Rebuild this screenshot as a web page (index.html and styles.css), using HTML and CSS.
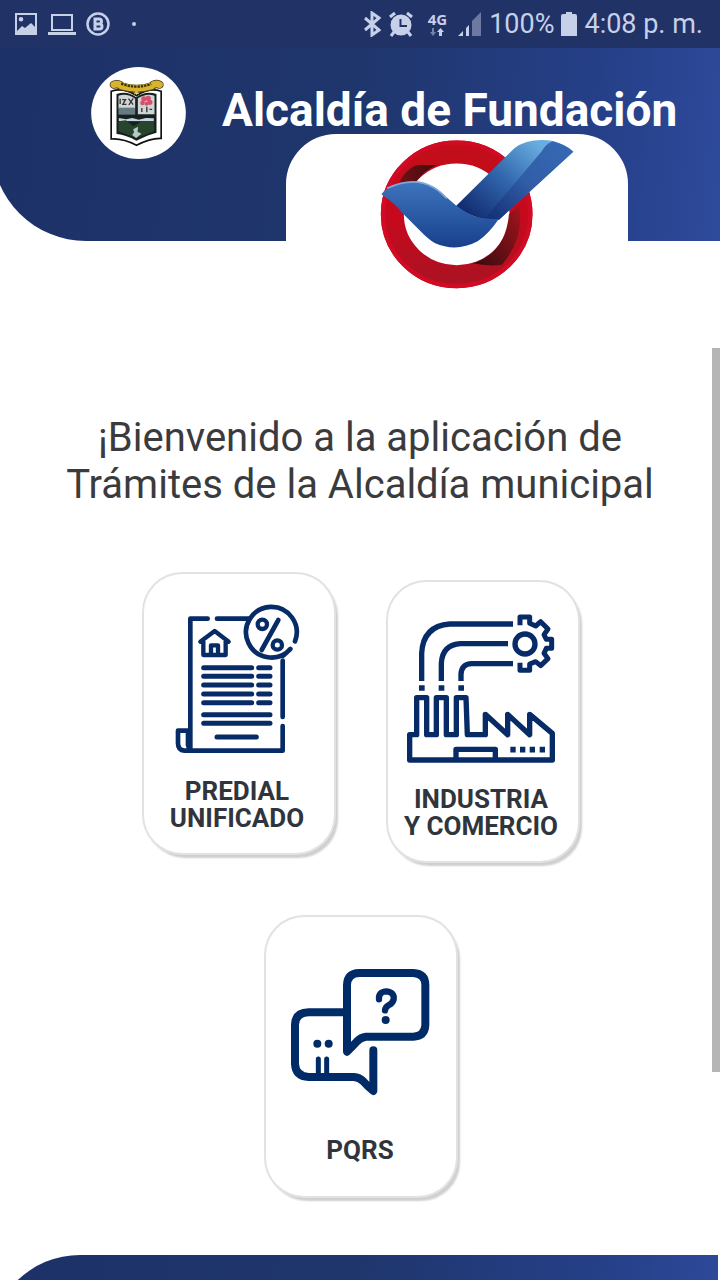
FILE: index.html
```html
<!DOCTYPE html>
<html lang="es">
<head>
<meta charset="utf-8">
<meta name="viewport" content="width=device-width, initial-scale=1">
<title>Alcaldía de Fundación</title>
<link rel="stylesheet" href="styles.css">
</head>
<body>
<div class="status">
  <div class="status-left">
    <svg width="24" height="24" viewBox="0 0 24 24"><path fill="currentColor" fill-rule="evenodd" d="M1 1h22v22H1zM3 3v16l5-5 3 2 6-5 4 4V3zM7 5a2.300 2.300 0 1 1 0 4.600a2.300 2.300 0 0 1 0-4.600z"/></svg>
    <svg width="28" height="24" viewBox="0 0 28 24"><path fill="none" stroke="currentColor" stroke-width="2" d="M4 3h20v15H4z"/><path fill="currentColor" d="M0 20h28v3H0z"/></svg>
    <svg width="24" height="24" viewBox="0 0 24 24" fill="none" stroke="currentColor"><circle cx="12" cy="12" r="10.500" stroke-width="2.500"/><path stroke-width="3" d="M9 7h4a2 2 0 0 1 0 5H9zM9 12h4.500a2.300 2.300 0 0 1 0 5H9z"/></svg>
    <span class="dot"></span>
  </div>
  <div class="status-right">
    <svg width="18" height="26" viewBox="0 0 18 26" fill="none" stroke="currentColor" stroke-width="3"><path d="M2 7l14 12-7 5V2l7 5L2 19"/></svg>
    <svg width="26" height="26" viewBox="0 0 26 26"><circle cx="13" cy="14" r="10.500" fill="currentColor"/><path fill="none" stroke="currentColor" stroke-width="3" d="M2 6l5-4M24 6l-5-4M6 21l-3 4M20 21l3 4"/><path class="cut" d="M12.500 8v7H19"/></svg>
    <span class="network"><b>4G</b><svg width="16" height="8" viewBox="0 0 16 8"><path fill="currentColor" opacity=".5" d="M3 0h2v4h2L4 8 1 4h2z"/><path fill="currentColor" d="M10 8h3V4h2l-3.500-4L8 4h2z"/></svg></span>
    <svg width="24" height="26" viewBox="0 0 24 26" fill="currentColor"><path d="M0 25l5-5v5zM8 17l3-3v11H8z"/><path opacity=".45" d="M14 10l9-9v24h-9z"/></svg>
    <span>100%</span>
    <svg width="16" height="26" viewBox="0 0 16 26"><path fill="currentColor" d="M5 1h6v2h3a2 2 0 0 1 2 2v20H0V5a2 2 0 0 1 2-2h3z"/></svg>
    <span>4:08 p. m.</span>
  </div>
</div>

<header class="banner">
  <div class="brand">
    <svg class="crest" viewBox="36 18 284 276" role="img" aria-label="Escudo de Fundación">
      <ellipse cx="178" cy="156" rx="142" ry="138" fill="#fff"/>
      <path fill="#fff" stroke="#111" stroke-width="5" d="M96 91Q135 78 172 104Q209 78 246 91V232Q213 231 172 253Q130 231 96 234z"/>
      <path fill="#16201f" d="M112 99Q145 88 171 109Q198 88 232 99V215Q210 220 172 239Q133 219 112 219z"/>
      <path fill="#cfd5d5" d="M118 104Q145 96 168 113V143H118zM176 112Q202 95 226 104V160H176z"/>
      <path fill="#667b80" d="M118 140h50v21h-50z"/>
      <path fill="none" stroke="#333" stroke-width="4" d="M123 113v16M129 116h10l-8 14h11M148 113l14 18M162 112l-13 20M188 141v12M203 137v17M211 145h8"/>
      <g fill="#d9506e"><circle cx="194" cy="114" r="8"/><circle cx="207" cy="112" r="8"/><circle cx="212" cy="124" r="8"/><circle cx="190" cy="126" r="7"/><circle cx="202" cy="128" r="6"/></g>
      <path fill="#c3d5e1" d="M119 171l22 4 18-4 20 5 21-5 24 1v9l-105-1z"/>
      <path fill="#28442d" d="M118 181l22-3 23 18 25-15 37-1v31l-53 20-54-20z"/>
      <path fill="#b6c9c5" d="M162 205l15-8-2 15 12 6-16 13-12-9 6-8z"/>
      <path fill="none" stroke="#473b12" stroke-width="25" stroke-linecap="round" d="M104 71Q119 67 127 76Q172 91 217 76Q228 65 241 71"/>
      <path fill="none" stroke="#d7b42c" stroke-width="20" stroke-linecap="round" d="M104 71Q119 66 127 75Q172 89 217 75Q228 65 241 71"/>
      <path fill="none" stroke="#39300f" stroke-width="7" stroke-dasharray="7 3" d="M126 68Q172 85 216 69"/>
      <path fill="#d7b42c" d="M168 88h7l4 12-7-3-7 4z"/>
    </svg>
    <h1 class="title">Alcaldía de Fundación</h1>
  </div>
  <div class="tab">
    <svg class="check" viewBox="60 36 582 456" role="img" aria-label="Marca de verificación">
      <defs>
        <linearGradient id="ring" x1="0" y1="0" x2="0" y2="1"><stop offset="0" stop-color="#c20e1b"/><stop offset=".5" stop-color="#c8081d"/><stop offset="1" stop-color="#ad1222"/></linearGradient>
        <linearGradient id="arm" gradientUnits="userSpaceOnUse" x1="340" y1="270" x2="530" y2="50"><stop offset="0" stop-color="#132e73"/><stop offset=".5" stop-color="#3167ad"/><stop offset="1" stop-color="#68ade0"/></linearGradient>
        <linearGradient id="side" gradientUnits="userSpaceOnUse" x1="400" y1="280" x2="600" y2="60"><stop offset="0" stop-color="#143277"/><stop offset=".5" stop-color="#315da7"/><stop offset="1" stop-color="#3568b2"/></linearGradient>
        <linearGradient id="wave" x1="0" y1="0" x2="0" y2="1"><stop offset="0" stop-color="#3e75bd"/><stop offset="1" stop-color="#18408c"/></linearGradient>
        <linearGradient id="dark" x1="0" y1="0" x2="1" y2="0"><stop offset="0" stop-color="#721014"/><stop offset="1" stop-color="#3a0d10"/></linearGradient>
        <linearGradient id="dark2" x1="0" y1="1" x2="1" y2="0"><stop offset="0" stop-color="#360b0d"/><stop offset="1" stop-color="#a5141d"/></linearGradient>
      </defs>
      <ellipse cx="290" cy="265" rx="193" ry="187" fill="none" stroke="url(#ring)" stroke-width="69"/>
      <ellipse cx="290" cy="265" rx="221" ry="215" fill="none" stroke="#d20a23" stroke-width="13"/>
      <path fill="url(#dark)" d="M118 168Q135 132 170 117H232Q194 131 167 169z"/>
      <path fill="url(#dark2)" d="M337 412Q436 383 447 265L478 238Q494 335 426 416Q386 422 337 412z"/>
      <path fill="url(#arm)" d="M288 240L464 66Q505 35 576 44Q618 56 640 77L417 281Q344 286 288 240z"/>
      <path fill="url(#side)" d="M374 278L546 75Q557 54 579 46Q618 56 640 77L417 281z"/>
      <path fill="url(#wave)" d="M64 205Q80 182 119 171Q190 158 237 194L290 240Q345 286 417 278Q387 322 353 346Q289 380 224 351Q205 340 181 315L127 261Q105 232 64 205z"/>
      <path fill="none" stroke="#82a9d5" stroke-width="5" d="M81 187Q160 150 218 183Q236 192 260 217"/>
    </svg>
  </div>
</header>

<main class="content">
  <p class="welcome">¡Bienvenido a la aplicación de<br>Trámites de la Alcaldía municipal</p>
  <div class="cards">
    <button class="card" type="button">
      <svg width="126" height="152" viewBox="135 132 378 456" fill="none" stroke="#072b66" stroke-width="14" stroke-linecap="round" stroke-linejoin="round">
        <path d="M236 176H184V571M264 176H362M461 302V471M461 498V572H166Q147 571 147 550V512H180M184 571Q181 571 177 555V512"/>
        <path d="M498 244A76 76 0 1 0 484 267L463 287"/>
        <circle cx="400" cy="193" r="14" stroke-width="13"/><circle cx="445" cy="255" r="14" stroke-width="13"/><path d="M448 180L398 270"/>
        <path stroke-width="13" d="M214 245L257 213L299 245M223 243V285H290V243M246 283V256H267V283"/>
        <path stroke-width="15" d="M224 323H368M389 323H423M224 349H368M389 349H423M224 375H368M389 375H423M224 402H368M389 402H423M224 428H368M389 428H423M224 464H423M224 490H423M264 531H382"/>
      </svg>
      <span class="label">PREDIAL<br>UNIFICADO</span>
    </button>
    <button class="card lowered" type="button">
      <svg width="152" height="152" viewBox="78 126 456 456" fill="none" stroke="#072b66" stroke-width="16" stroke-linejoin="round">
        <path d="M128 333V250Q132 168 212 162H402M187 333V280Q190 224 245 221H387M246 333V312Q248 282 278 281H402"/>
        <path stroke-width="17" d="M120 354h17M179 354h17M238 354h17M394 539h16M423 539h16M452 539h16M482 539h16"/>
        <path d="M92 570V494H113V383H143V494H172V383H202V494H232V383H261L265 494H319V433L386 494V433L452 494V433L520 490V570ZM231 570V538H349V570"/>
        <circle cx="438" cy="222" r="30"/>
        <path stroke-width="15" d="M423 166V141H452V160L470 168L485 155L507 177L495 194L502 208H518V235H502L495 250L507 266L485 287L470 275L452 282V301H423V278"/>
      </svg>
      <span class="label">INDUSTRIA<br>Y COMERCIO</span>
    </button>
    <button class="card short" type="button">
      <svg width="142" height="130" viewBox="123 201 426 390" fill="none" stroke="#002b67" stroke-width="24" stroke-linecap="round" stroke-linejoin="round">
        <path d="M297 455V255Q298 220 333 219H496Q532 221 532 255V376Q530 409 496 410H354Q337 412 326 425Q312 440 297 455Z"/>
        <path d="M285 337H182Q142 338 141 374V492Q143 529 182 531H318Q334 532 346 544Q360 560 376 573V451"/>
        <path stroke-width="19" d="M393 298Q391 275 416 274Q440 277 437 298Q434 309 423 315Q412 321 411 331"/>
        <circle cx="413" cy="360" r="12" fill="#002b67" stroke="none"/>
        <g fill="#002b67" stroke="none"><circle cx="208" cy="431" r="12"/><circle cx="242" cy="431" r="12"/></g>
        <path stroke-width="15" d="M211 477V523M236 477V523"/>
      </svg>
      <span class="label">PQRS</span>
    </button>
  </div>
</main>
<footer class="footer"><div class="footer-shape"></div></footer>
<div class="scroll-thumb"></div>
</body>
</html>
```

FILE: styles.css
```css
* { box-sizing: border-box; }
:root { --navy: linear-gradient(96deg, #1c3168 0%, #1f366d 50%, #264089 83%, #2e4a9b 100%); }
body {
  margin: 0;
  min-height: 100vh;
  display: flex;
  flex-direction: column;
  position: relative;
  overflow-x: hidden;
  background: #fff;
  font-family: Roboto, "Liberation Sans", sans-serif;
}
svg { display: block; flex: none; }

.status {
  height: 48px;
  padding: 0 17px 0 14px;
  display: flex;
  align-items: center;
  justify-content: space-between;
  background: #213267;
  color: #c7d0e9;
  font-size: 27px;
  line-height: 50px;
  white-space: nowrap;
}
.status-left { display: flex; align-items: center; gap: 10px; }
.status-right { display: flex; align-items: center; gap: 7px; }
.dot { width: 4px; height: 4px; margin-left: 12px; border-radius: 50%; background: currentColor; }
.cut { fill: none; stroke: #213267; stroke-width: 2; }
.network { display: flex; flex-direction: column; align-items: center; gap: 2px; margin: 0 4px 0 7px; }
.network b { font: 700 15px/14px "Noto Sans", sans-serif; }

.banner { position: relative; }
.banner::before {
  content: "";
  position: absolute;
  inset: 0 0 0 -8px;
  z-index: -1;
  background: var(--navy);
  border-bottom-left-radius: 94px;
}
.brand { display: flex; align-items: flex-start; gap: 36px; height: 86px; padding: 19px 0 0 91px; }
.crest { width: 95px; height: 92px; }
.title { margin: 0; color: #fff; font-size: 46px; font-weight: 700; line-height: 86px; white-space: nowrap; }
.tab {
  width: 47.5%;
  height: 107px;
  margin: 0 12.8% 0 auto;
  padding-top: 4px;
  background: #fff;
  border-radius: 50px 50px 0 0;
  display: flex;
  justify-content: center;
}
.check { width: 194px; height: 152px; margin-left: 40px; }

.content { flex: 1; padding: 173px 0 58px; }
.welcome { margin: 0 0 66px; text-align: center; color: #3b3b3d; font-size: 40px; line-height: 47px; }
.cards {
  display: flex;
  flex-wrap: wrap;
  justify-content: center;
  align-items: flex-start;
  gap: 56px 54px;
  max-width: 560px;
  margin: 0 auto;
  padding-left: 2px;
}
.card {
  width: 190px;
  min-height: 279px;
  padding: 30px 4px 0 0;
  display: flex;
  flex-direction: column;
  align-items: center;
  gap: 22px;
  border: 0;
  border-radius: 38px;
  background: #fff;
  box-shadow: 0 0 0 2px #e2e2e2, 3px 4px 2px 1px #cfcfcf;
  color: #30353d;
  font-family: inherit;
}
.lowered { margin-top: 8px; }
.short { padding: 50px 2px 0 0; gap: 40px; }
.label { font-size: 26px; font-weight: 700; line-height: 27px; }

.footer { height: 25px; padding-right: 2px; overflow: hidden; }
.footer-shape { height: 180px; margin-left: -10px; border-top-left-radius: 90px; background: var(--navy); }
.scroll-thumb { position: absolute; top: 348px; right: 0; width: 8px; height: 724px; background: #b5b5b5; }
```
